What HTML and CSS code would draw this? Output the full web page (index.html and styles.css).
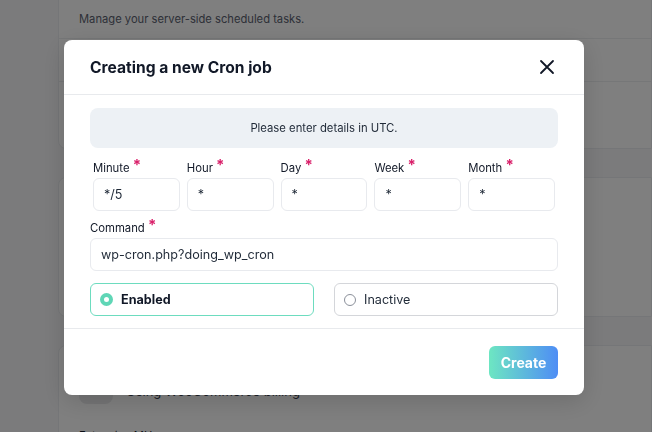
FILE: index.html
```html
<!DOCTYPE html>
<html lang="en">
<head>
  <meta charset="UTF-8" />
  <title>Cron jobs</title>
  <link rel="stylesheet" href="styles.css">
</head>
<body>

  <!-- Page behind the dialog -->
  <div class="page">
    <div class="card card-top">
      <div class="card-title">Cron jobs</div>
      <div class="card-sub">Manage your server-side scheduled tasks.</div>
      <div class="row"></div>
      <div class="row"></div>
    </div>
    <div class="card card-mid"></div>
    <div class="card card-low">
      <div class="toggle-row">
        <span class="toggle"></span>
        <span class="toggle-label">Using WooCommerce billing</span>
      </div>
      <div class="card-sub dark">Extension MU</div>
    </div>
  </div>

  <!-- Dialog -->
  <div class="overlay">
    <div class="modal">
      <div class="modal-head">
        <div class="modal-title">Creating a new Cron job</div>
        <svg class="close" width="16" height="16" viewBox="0 0 16 16">
          <path d="M2 2L14 14M14 2L2 14" stroke="#111827" stroke-width="1.8" stroke-linecap="round"/>
        </svg>
      </div>

      <div class="modal-body">
        <div class="info">Please enter details in UTC.</div>

        <div class="fields">
          <div class="field">
            <label>Minute <span class="req">*</span></label>
            <div class="input">*/5</div>
          </div>
          <div class="field">
            <label>Hour <span class="req">*</span></label>
            <div class="input">*</div>
          </div>
          <div class="field">
            <label>Day <span class="req">*</span></label>
            <div class="input">*</div>
          </div>
          <div class="field">
            <label>Week <span class="req">*</span></label>
            <div class="input">*</div>
          </div>
          <div class="field">
            <label>Month <span class="req">*</span></label>
            <div class="input">*</div>
          </div>
        </div>

        <div class="field command">
          <label>Command <span class="req">*</span></label>
          <div class="input">wp-cron.php?doing_wp_cron</div>
        </div>

        <div class="choices">
          <div class="choice active"><span class="dot"></span>Enabled</div>
          <div class="choice"><span class="dot"></span>Inactive</div>
        </div>
      </div>

      <div class="modal-foot">
        <button>Create</button>
      </div>
    </div>
  </div>

</body>
</html>
```

FILE: styles.css
```css
body {
  margin: 0;
  font-family: Inter, "Noto Sans", sans-serif;
  background: #f6f7f9;
  color: #111827;
  overflow: hidden;
}

.page {
  padding-left: 58px;
  display: flex;
  flex-direction: column;
  gap: 28px;
  margin-top: -40px;
}

.card {
  background: #fff;
  border: 1px solid #ebedf0;
  border-radius: 8px 0 0 8px;
}

.card-top {
  height: 187px;
}

.card-title {
  padding: 20px 20px 0;
  font-size: 15px;
  font-weight: 600;
  height: 30px;
}

.card-sub {
  padding: 0 20px;
  font-size: 11.2px;
  line-height: 16px;
  color: #5b6170;
  height: 27px;
}

.card-sub.dark {
  color: #111827;
  padding-top: 24px;
}

.row {
  border-top: 1px solid #eceef1;
  height: 42px;
}

.card-mid {
  height: 138px;
}

.card-low {
  height: 120px;
}

.toggle-row {
  display: flex;
  align-items: flex-start;
  gap: 13px;
  padding: 42px 20px 0;
}

.toggle {
  width: 34px;
  height: 16px;
  border-radius: 8px;
  background: #e9eaec;
}

.toggle-label {
  font-size: 13px;
  line-height: 14px;
  margin-top: -4px;
  color: #374151;
}

/* Dialog */

.overlay {
  position: fixed;
  inset: 0;
  background: rgba(0, 0, 0, 0.5);
  display: flex;
  justify-content: center;
  align-items: flex-start;
  padding: 40px 4px 0 0;
}

.modal {
  width: 520px;
  background: #fff;
  border-radius: 8px;
  box-shadow: 0 6px 24px rgba(0, 0, 0, 0.15);
}

.modal-head {
  height: 54px;
  padding: 0 26px;
  display: flex;
  align-items: center;
  justify-content: space-between;
  border-bottom: 1px solid #e8eaed;
}

.modal-title {
  font-size: 15.6px;
  font-weight: 700;
  color: #111827;
}

.close {
  margin-right: 3px;
}

.modal-body {
  padding: 13px 26px 12px;
  border-bottom: 1px solid #e8eaed;
}

.info {
  height: 40px;
  background: #edf1f5;
  border-radius: 8px;
  display: flex;
  align-items: center;
  justify-content: center;
  font-size: 11.3px;
  color: #1f2937;
}

.fields {
  display: grid;
  grid-template-columns: repeat(5, 1fr);
  gap: 7px;
  padding: 0 3px;
  margin-top: 11px;
}

.field label {
  display: block;
  font-size: 11.3px;
  line-height: 16px;
  color: #111827;
  margin-bottom: 2px;
}

.req {
  color: #d9206a;
  font-size: 15px;
  font-weight: 700;
  position: relative;
  top: -2px;
}

.input {
  height: 31px;
  border: 1px solid #e8eaee;
  border-radius: 6px;
  display: flex;
  align-items: center;
  padding: 0 10px;
  font-size: 12.6px;
  color: #1f2937;
}

.command {
  margin-top: 8px;
}

.choices {
  display: grid;
  grid-template-columns: 1fr 1fr;
  gap: 20px;
  margin-top: 12px;
}

.choice {
  height: 31px;
  border: 1px solid #d4d6da;
  border-radius: 6px;
  display: flex;
  align-items: center;
  gap: 8px;
  padding: 0 9px;
  font-size: 12.6px;
  color: #1f2937;
}

.choice.active {
  border-color: #6ddcbf;
  font-weight: 700;
  color: #111827;
}

.dot {
  width: 10px;
  height: 10px;
  border: 1.5px solid #8b909a;
  border-radius: 50%;
}

.choice.active .dot {
  border: 4px solid #5fd6b6;
  width: 5px;
  height: 5px;
  background: #fff;
}

.modal-foot {
  height: 66px;
  padding: 0 26px;
  display: flex;
  align-items: center;
  justify-content: flex-end;
}

button {
  height: 33px;
  width: 69px;
  border: none;
  border-radius: 6px;
  background: linear-gradient(to right, #6de6c2, #4e8df5);
  color: #fff;
  font-family: inherit;
  font-size: 14px;
  font-weight: 700;
  margin-top: 1px;
}
```
